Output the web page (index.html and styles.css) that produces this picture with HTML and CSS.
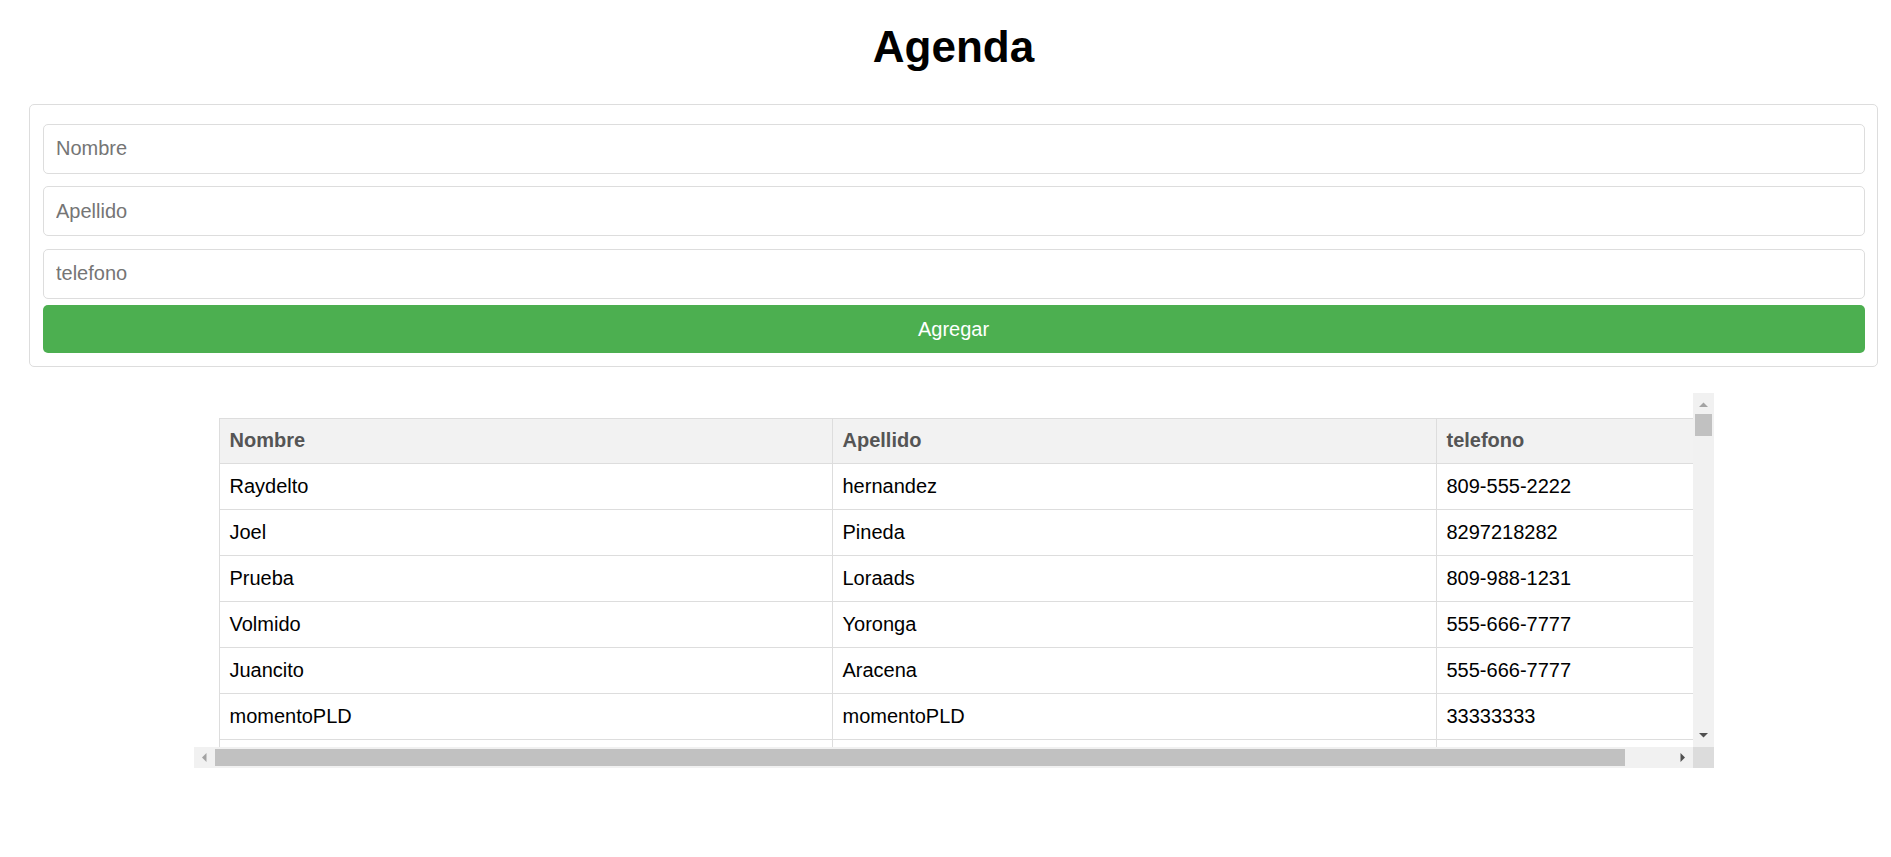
FILE: index.html
```html
<!DOCTYPE html>
<html lang="es">
<head>
<meta charset="utf-8">
<title>Agenda</title>
<link rel="stylesheet" href="styles.css">
</head>
<body>
<div class="page">
  <h1 class="title">Agenda</h1>
  <form class="form-card">
    <input class="field" type="text" placeholder="Nombre">
    <input class="field" type="text" placeholder="Apellido">
    <input class="field" type="text" placeholder="telefono">
    <button class="btn-add" type="button">Agregar</button>
  </form>
  <div class="table-scroll">
    <div class="viewport">
      <table class="contacts">
        <colgroup>
          <col class="col-a"><col class="col-b"><col class="col-c">
        </colgroup>
        <thead>
          <tr><th>Nombre</th><th>Apellido</th><th>telefono</th></tr>
        </thead>
        <tbody>
          <tr><td>Raydelto</td><td>hernandez</td><td>809-555-2222</td></tr>
          <tr><td>Joel</td><td>Pineda</td><td>8297218282</td></tr>
          <tr><td>Prueba</td><td>Loraads</td><td>809-988-1231</td></tr>
          <tr><td>Volmido</td><td>Yoronga</td><td>555-666-7777</td></tr>
          <tr><td>Juancito</td><td>Aracena</td><td>555-666-7777</td></tr>
          <tr><td>momentoPLD</td><td>momentoPLD</td><td>33333333</td></tr>
          <tr class="filler"><td></td><td></td><td></td></tr>
        </tbody>
      </table>
    </div>
    <div class="vbar">
      <span class="sb-btn">
        <svg viewBox="0 0 21 21" width="21" height="21"><polygon class="arrow-off" points="6,14 15,14 10.5,9.5"/></svg>
      </span>
      <span class="vthumb"></span>
      <span class="sb-track"></span>
      <span class="sb-btn">
        <svg viewBox="0 0 21 21" width="21" height="21"><polygon class="arrow-on" points="6,7 15,7 10.5,11.5"/></svg>
      </span>
    </div>
    <div class="hbar">
      <span class="sb-btn">
        <svg viewBox="0 0 21 21" width="21" height="21"><polygon class="arrow-off" points="12.5,6 12.5,15 8,10.5"/></svg>
      </span>
      <span class="hthumb"></span>
      <span class="sb-track"></span>
      <span class="sb-btn">
        <svg viewBox="0 0 21 21" width="21" height="21"><polygon class="arrow-on" points="8.5,6 8.5,15 13,10.5"/></svg>
      </span>
    </div>
    <div class="sb-corner"></div>
  </div>
</div>
</body>
</html>
```
FILE: styles.css
```css
html, body {
  margin: 0;
  padding: 0;
  background: #fff;
}

body {
  font-family: "Liberation Sans", Arial, sans-serif;
  font-size: 20px;
  color: #000;
}

.page {
  padding: 0 13px 40px 29px;
}

.title {
  margin: 22px 0 32px;
  font-size: 44px;
  font-weight: bold;
  line-height: normal;
  text-align: center;
}

.form-card {
  margin: 0;
  border: 1px solid #ddd;
  border-radius: 5px;
  padding: 12.5px;
  display: flex;
  flex-direction: column;
}

.field {
  display: block;
  box-sizing: border-box;
  width: 100%;
  height: 50px;
  margin: 6.25px 0;
  padding: 0 12.5px;
  border: 1px solid #ddd;
  border-radius: 5px;
  font-family: "Liberation Sans", Arial, sans-serif;
  font-size: 20px;
  color: #000;
  background: #fff;
  outline: none;
}

.field::placeholder {
  color: #757575;
}

.btn-add {
  display: block;
  box-sizing: border-box;
  width: 100%;
  height: 48px;
  margin: 0;
  padding: 0;
  border: none;
  border-radius: 5px;
  background: #4caf50;
  color: #fff;
  font-family: "Liberation Sans", Arial, sans-serif;
  font-size: 20px;
  line-height: 23px;
}

/* Scroll area with drawn scrollbars */
.table-scroll {
  display: grid;
  grid-template-columns: 1499px 21px;
  grid-template-rows: 354px 21px;
  width: 1520px;
  margin: 26px auto 0;
}

.viewport {
  overflow: hidden;
  min-width: 0;
}

.contacts {
  border-collapse: collapse;
  table-layout: fixed;
  width: 1499px;
  margin: 25px;
}

.col-a { width: 613px; }
.col-b { width: 604px; }
.col-c { width: 282px; }

.contacts th,
.contacts td {
  border: 1px solid #ddd;
  text-align: left;
  line-height: 23px;
  padding: 11px 10px;
  white-space: nowrap;
}

.contacts th {
  background: #f2f2f2;
  color: #555;
  font-weight: bold;
  padding: 10.5px 10px;
}

.contacts .filler td {
  height: 60px;
  padding: 0;
}

.vbar,
.hbar {
  display: flex;
  background: #f1f1f1;
}

.vbar {
  flex-direction: column;
}

.hbar {
  flex-direction: row;
}

.sb-btn {
  flex: 0 0 21px;
  width: 21px;
  height: 21px;
  display: block;
}

.sb-btn svg {
  display: block;
}

.arrow-off {
  fill: #a3a3a3;
}

.arrow-on {
  fill: #505050;
}

.sb-track {
  flex: 1 1 auto;
}

.vthumb {
  flex: 0 0 22px;
  margin: 0 2px;
  background: #c1c1c1;
}

.hthumb {
  flex: 0 0 1410px;
  margin: 2px 0;
  background: #c1c1c1;
}

.sb-corner {
  background: #dcdcdc;
}
```
